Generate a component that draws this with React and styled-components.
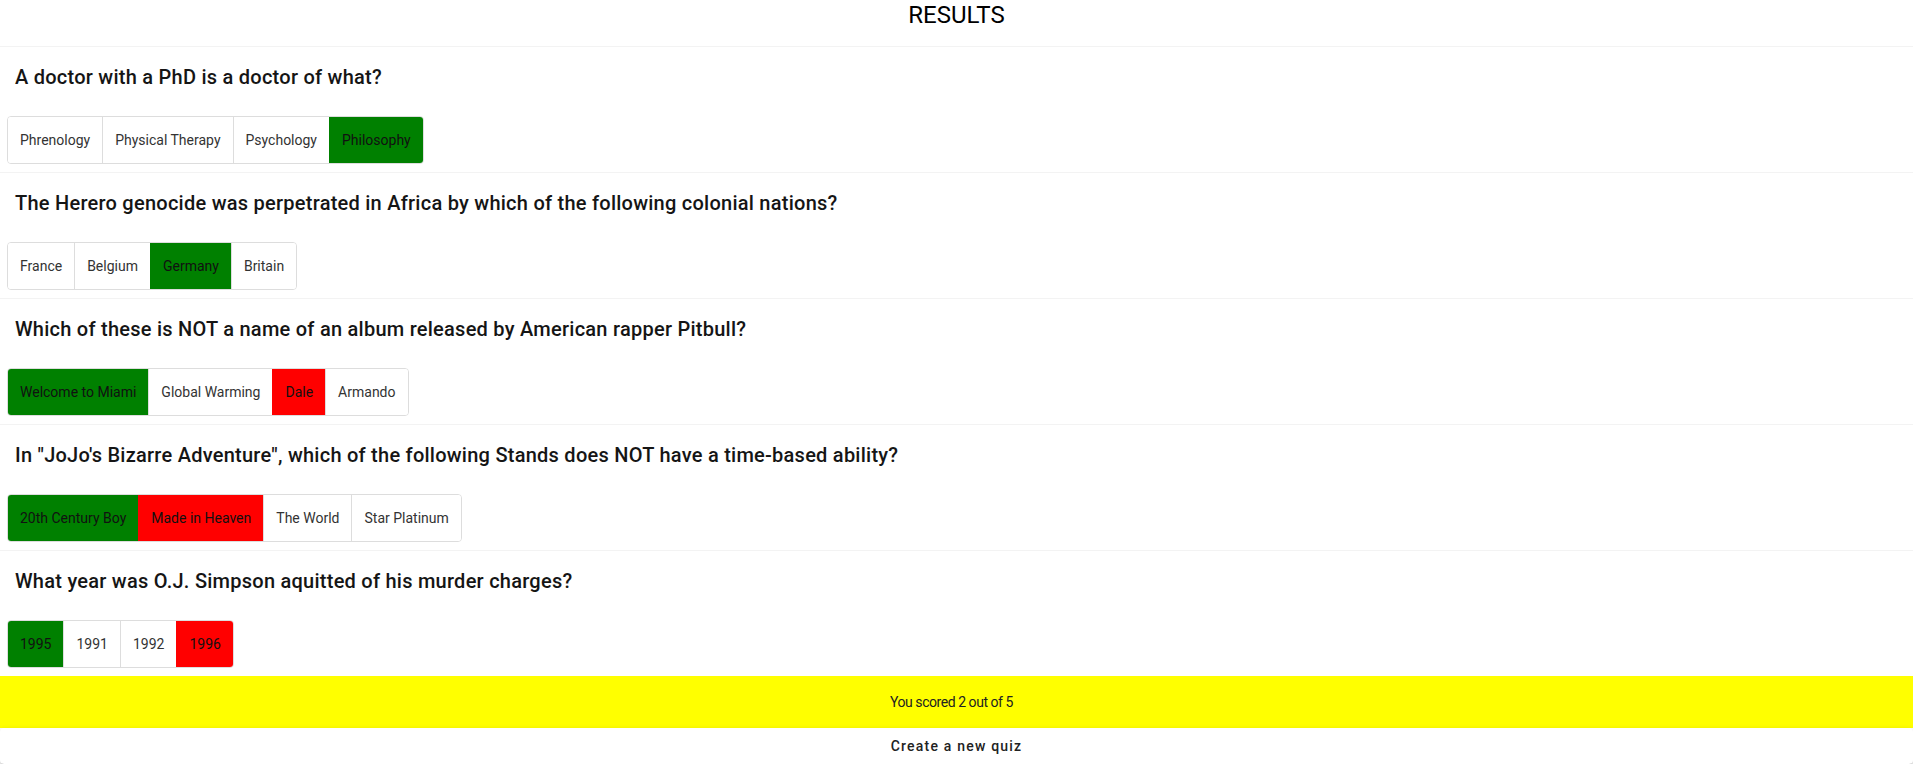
import React from "react";
import styled, { createGlobalStyle } from "styled-components";

const Global = createGlobalStyle`
  html, body { margin: 0; padding: 0; background: #ffffff; }
  body { font-family: Roboto, "Liberation Sans", Arial, sans-serif; color: #000; }
  * { box-sizing: border-box; }
`;

const Page = styled.div`
  display: flex;
  flex-direction: column;
  width: 100%;
`;

const Header = styled.header`
  height: 46px;
  display: flex;
  justify-content: center;
  align-items: flex-start;
  padding-top: 1px;
  font-size: 24px;
  font-weight: 400;
  line-height: 28px;
  color: #000;
`;

const Card = styled.section`
  height: 126px;
  border-top: 1px solid #f3f3f3;
  background: #fff;
  display: flex;
  flex-direction: column;
  align-items: flex-start;
  padding: 0 0 0 7px;
`;

const Question = styled.h3`
  margin: 0;
  padding: 18px 0 0 8px;
  height: 69px;
  font-size: 20px;
  font-weight: 500;
  line-height: 24px;
  letter-spacing: 0.25px;
  color: #151515;
`;

const Group = styled.div`
  display: inline-flex;
  height: 48px;
  border: 1px solid #dddddd;
  border-radius: 4px;
  overflow: hidden;
`;

const bg = { correct: "#008000", wrong: "#ff0000", none: "#ffffff" };

const Option = styled.div`
  display: flex;
  align-items: center;
  padding: 0 12px;
  font-size: 14px;
  color: ${(p) => (p.$state === "none" ? "#333333" : "#111111")};
  background: ${(p) => bg[p.$state]};
  border-left: 1px solid ${(p) => (p.$state === "none" ? "#dddddd" : bg[p.$state])};
  &:first-child { border-left: none; }
`;

const Score = styled.div`
  height: 52px;
  background: #ffff00;
  display: flex;
  align-items: center;
  justify-content: center;
  padding-right: 10px;
  font-size: 14px;
  letter-spacing: -0.45px;
  color: #222;
`;

const NewQuiz = styled.button`
  height: 36px;
  width: 100%;
  border: none;
  border-radius: 4px;
  background: #fff;
  padding: 0;
  font-family: Roboto, "Liberation Sans", Arial, sans-serif;
  font-size: 14px;
  font-weight: 500;
  letter-spacing: 1.2px;
  color: #222;
  box-shadow: 0px 3px 1px -2px rgba(0,0,0,0.2), 0px 2px 2px 0px rgba(0,0,0,0.14), 0px 1px 5px 0px rgba(0,0,0,0.12);
  cursor: pointer;
`;

const questions = [
  {
    q: "A doctor with a PhD is a doctor of what?",
    a: [["Phrenology", "none"], ["Physical Therapy", "none"], ["Psychology", "none"], ["Philosophy", "correct"]],
  },
  {
    q: "The Herero genocide was perpetrated in Africa by which of the following colonial nations?",
    a: [["France", "none"], ["Belgium", "none"], ["Germany", "correct"], ["Britain", "none"]],
  },
  {
    q: "Which of these is NOT a name of an album released by American rapper Pitbull?",
    a: [["Welcome to Miami", "correct"], ["Global Warming", "none"], ["Dale", "wrong"], ["Armando", "none"]],
  },
  {
    q: 'In "JoJo\'s Bizarre Adventure", which of the following Stands does NOT have a time-based ability?',
    a: [["20th Century Boy", "correct"], ["Made in Heaven", "wrong"], ["The World", "none"], ["Star Platinum", "none"]],
  },
  {
    q: "What year was O.J. Simpson aquitted of his murder charges?",
    a: [["1995", "correct"], ["1991", "none"], ["1992", "none"], ["1996", "wrong"]],
  },
];

export default function App() {
  return (
    <Page>
      <Global />
      <Header>RESULTS</Header>
      {questions.map((item) => (
        <Card key={item.q}>
          <Question>{item.q}</Question>
          <Group>
            {item.a.map(([label, state]) => (
              <Option key={label} $state={state}>{label}</Option>
            ))}
          </Group>
        </Card>
      ))}
      <Score>You scored 2 out of 5</Score>
      <NewQuiz>Create a new quiz</NewQuiz>
    </Page>
  );
}
